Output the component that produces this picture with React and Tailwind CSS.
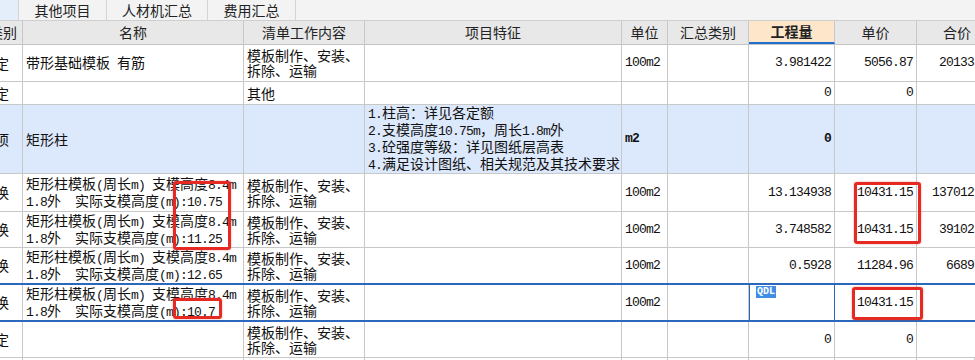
import React from "react";

const COLS = "grid grid-cols-[23px_221px_121px_257px_46px_81px_86px_82px_58px]";
const MONO = "font-['Liberation_Mono',monospace] text-[13px] tracking-[-0.8px]";

function Mixed({ t }) {
  const parts = t.split(/([\x20-\x7e]+)/).filter((p) => p.length);
  return (
    <>
      {parts.map((p, i) =>
        /^[\x20-\x7e]+$/.test(p) ? (
          <span key={i} className={MONO}>
            {p}
          </span>
        ) : (
          <span key={i}>{p}</span>
        )
      )}
    </>
  );
}

function Lines({ lines }) {
  return (
    <div className="flex flex-col">
      {lines.map((l, i) => (
        <div key={i} className="whitespace-pre leading-[15px]">
          <Mixed t={l} />
        </div>
      ))}
    </div>
  );
}

const QD = ["模板制作、安装、", "拆除、运输"];
const L1 = "矩形柱模板(周长m) 支模高度8.4m";

const rows = [
  { h: "h-[37px]", type: "定", name: ["带形基础模板 有筋"], qd: QD, unit: "100m2", qty: "3.981422", price: "5056.87", total: "20133" },
  { h: "h-[23px]", type: "定", name: [], qd: ["其他"], qty: "0", price: "0" },
  {
    h: "h-[69px]",
    type: "项",
    blue: true,
    name: ["矩形柱"],
    qd: [],
    feat: ["1.柱高：详见各定额", "2.支模高度10.75m，周长1.8m外", "3.砼强度等级：详见图纸层高表", "4.满足设计图纸、相关规范及其技术要求"],
    unit: "m2",
    qty: "0",
    bold: true,
  },
  { h: "h-[38px]", type: "换", name: [L1, "1.8外  实际支模高度(m):10.75"], qd: QD, unit: "100m2", qty: "13.134938", price: "10431.15", total: "137012" },
  { h: "h-[36px]", type: "换", name: [L1, "1.8外  实际支模高度(m):11.25"], qd: QD, unit: "100m2", qty: "3.748582", price: "10431.15", total: "39102" },
  { h: "h-[37px]", type: "换", name: [L1, "1.8外  实际支模高度(m):12.65"], qd: QD, unit: "100m2", qty: "0.5928", price: "11284.96", total: "6689", blueB: true },
  { h: "h-[37px]", type: "换", name: [L1, "1.8外  实际支模高度(m):10.7"], qd: QD, unit: "100m2", edit: true, price: "10431.15", blueB: true },
  { h: "h-[36px]", type: "定", name: [], qd: QD, qty: "0", price: "0" },
];

const cell = "border-r border-[#c8c8c8] overflow-hidden flex items-center";

function Row({ r }) {
  const rowCls =
    COLS +
    " " +
    r.h +
    " " +
    (r.blueB ? "border-b-2 border-[#2a67bd]" : "border-b border-[#c8c8c8]") +
    " " +
    (r.blue ? "bg-[#dce8fb]" : "bg-white");
  return (
    <div className={rowCls}>
      <div className={cell}>
        <span className="ml-[-5px] whitespace-nowrap">{r.type}</span>
      </div>
      <div className={cell + " pl-[3px]"}>
        <Lines lines={r.name} />
      </div>
      <div className={cell + " pl-[3px]"}>
        <Lines lines={r.qd} />
      </div>
      <div className={cell + " pl-[3px]"}>
        <Lines lines={r.feat || []} />
      </div>
      <div className={cell + " pl-[3px]"}>
        <span className={MONO + (r.bold ? " font-bold" : "")}>{r.unit || ""}</span>
      </div>
      <div className={cell}></div>
      {r.edit ? (
        <div className="relative border-x border-[#2a67bd] bg-white">
          <span className="absolute left-[6px] top-[1px] bg-[#3f8ee4] px-[1px] font-['Liberation_Mono',monospace] text-[10px] font-bold leading-[12px] text-white">
            QDL
          </span>
        </div>
      ) : (
        <div className={cell + " justify-end pr-[3px]"}>
          <span className={MONO + (r.bold ? " font-bold" : "")}>{r.qty || ""}</span>
        </div>
      )}
      <div className={cell + " justify-end pr-[3px]"}>
        <span className={MONO}>{r.price || ""}</span>
      </div>
      <div className="flex items-center justify-end overflow-hidden pr-[1px]">
        <span className={MONO}>{r.total || ""}</span>
      </div>
    </div>
  );
}

function RedBox({ cls }) {
  return (
    <div
      className={
        "pointer-events-none absolute rounded-[3px] border-[3px] border-[#e42a22] shadow-[0_0_2px_rgba(228,42,34,0.5)] " + cls
      }
    />
  );
}

export default function App() {
  return (
    <div className="relative h-[360px] w-[975px] overflow-hidden bg-white font-['Noto_Sans_CJK_SC',sans-serif] text-[14px] text-[#111]">
      {/* tab bar */}
      <div className="flex h-[21px] border-b border-[#cfcfcf] bg-[#f3f3f3] text-[14px] leading-[20px] text-[#222]">
        <div className="w-[19px] border-r border-[#d3d3d3] bg-[#e4eefa]"></div>
        <div className="flex w-[88px] justify-center border-r border-[#d3d3d3]">其他项目</div>
        <div className="flex w-[101px] justify-center border-r border-[#d3d3d3]">人材机汇总</div>
        <div className="flex w-[88px] justify-center border-r border-[#d3d3d3]">费用汇总</div>
        <div className="flex-1"></div>
      </div>
      {/* header */}
      <div className={COLS + " h-[24px] border-b border-[#c4c4c4] bg-[#e8e8e8] text-[#222]"}>
        <div className={cell}>
          <span className="ml-[-11px] whitespace-nowrap">类别</span>
        </div>
        <div className={cell + " justify-center"}>名称</div>
        <div className={cell + " justify-center"}>清单工作内容</div>
        <div className={cell + " justify-center"}>项目特征</div>
        <div className={cell + " justify-center"}>单位</div>
        <div className={cell + " justify-center"}>汇总类别</div>
        <div className={cell + " justify-center border-b-2 border-b-[#1f6fd1] bg-[#fde6c9] font-bold"}>工程量</div>
        <div className={cell + " justify-center"}>单价</div>
        <div className="flex items-center overflow-hidden pl-[26px]">合价</div>
      </div>
      {rows.map((r, i) => (
        <Row key={i} r={r} />
      ))}
      <div className={COLS + " h-[10px] bg-white"}>
        {Array.from({ length: 9 }).map((_, i) => (
          <div key={i} className="border-r border-[#c8c8c8]"></div>
        ))}
      </div>

      <RedBox cls="left-[173px] top-[181px] h-[69px] w-[58px]" />
      <RedBox cls="left-[173px] top-[298px] h-[21px] w-[49px]" />
      <RedBox cls="left-[854px] top-[182px] h-[62px] w-[67px]" />
      <RedBox cls="left-[852px] top-[287px] h-[33px] w-[71px]" />
    </div>
  );
}
